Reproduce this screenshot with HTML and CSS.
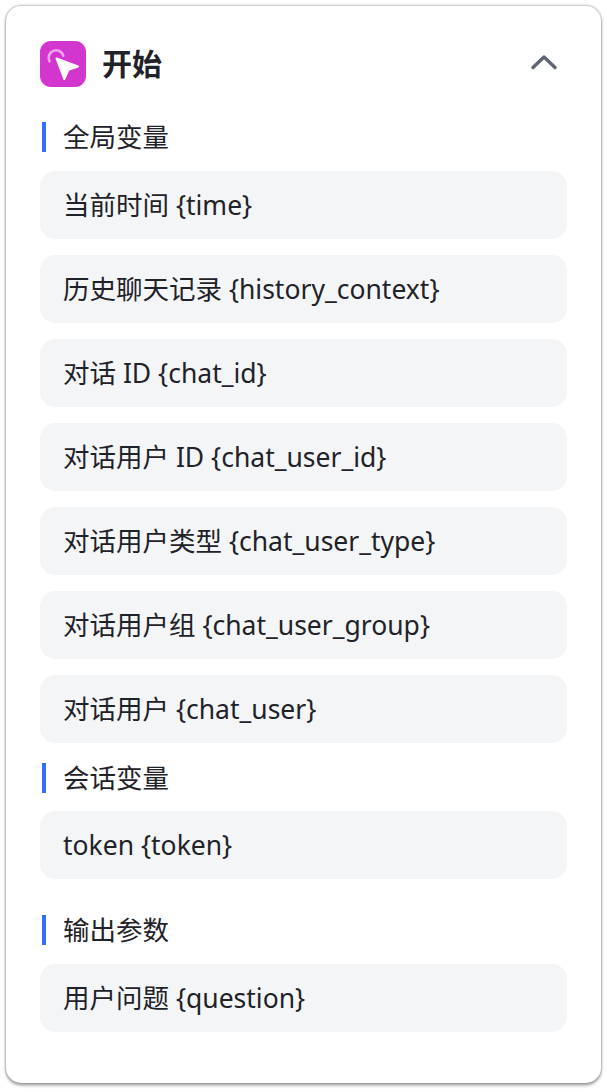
FILE: index.html
```html
<!DOCTYPE html>
<html lang="en">
<head>
  <meta charset="UTF-8" />
  <title>开始</title>
  <link rel="stylesheet" href="styles.css">
</head>
<body>
  <main class="node-card">
    <header class="node-header">
      <div class="node-title">
        <span class="node-icon">
          <svg viewBox="0 0 46 46" width="46" height="46">
            <path d="M9.500 20.300a7.500 7.500 0 1 1 13.800-5.700" fill="none" stroke="#eda6e8" stroke-width="2.600" stroke-linecap="round"/>
            <polygon points="16.500,17.500 38,25.500 28.500,28.800 24.300,38" fill="#fff" stroke="#fff" stroke-width="2" stroke-linejoin="round"/>
          </svg>
        </span>
        <h1>开始</h1>
      </div>
      <svg class="collapse-icon" viewBox="0 0 26 16" width="26" height="16">
        <path d="M2 13.500 13 3l11 10.500" fill="none" stroke="#5f6673" stroke-width="3.400" stroke-linecap="round" stroke-linejoin="round"/>
      </svg>
    </header>

    <h2 class="section-label">全局变量</h2>
    <ul class="var-list">
      <li>当前时间 {time}</li>
      <li>历史聊天记录 {history_context}</li>
      <li>对话 ID {chat_id}</li>
      <li>对话用户 ID {chat_user_id}</li>
      <li>对话用户类型 {chat_user_type}</li>
      <li>对话用户组 {chat_user_group}</li>
      <li>对话用户 {chat_user}</li>
    </ul>

    <h2 class="section-label section-session">会话变量</h2>
    <ul class="var-list">
      <li>token {token}</li>
    </ul>

    <h2 class="section-label section-output">输出参数</h2>
    <ul class="var-list">
      <li>用户问题 {question}</li>
    </ul>
  </main>
</body>
</html>
```

FILE: styles.css
```css
* {
  margin: 0;
  padding: 0;
  box-sizing: border-box;
}
body {
  font-family: "Noto Sans", "Noto Sans CJK SC", sans-serif;
  background: #fff;
  color: #1f2329;
  padding: 6px;
  height: 1092px;
}
.node-card {
  width: 595px;
  height: 1077px;
  background: #fff;
  border-radius: 15px;
  box-shadow: 0 0 3px rgba(0, 0, 0, 0.5), 0 3px 3px rgba(0, 0, 0, 0.25);
  padding: 34px 34px 0 34px;
}
.node-header {
  display: flex;
  justify-content: space-between;
  align-items: center;
  height: 46px;
  padding-right: 10px;
}
.node-title {
  display: flex;
  align-items: center;
  gap: 16px;
}
.node-icon {
  display: block;
  width: 46px;
  height: 46px;
  margin-top: 1px;
  background: #d335cf;
  border-radius: 11px;
}
.node-icon svg {
  display: block;
}
h1 {
  font-size: 30px;
  font-weight: 700;
  line-height: 46px;
  margin-top: 2px;
}
.collapse-icon {
  margin-top: -2px;
}
.section-label {
  display: flex;
  align-items: center;
  height: 30px;
  margin: 36px 0 19px 2px;
  padding-left: 17px;
  border-left: 4px solid #3370ff;
  font-size: 26.5px;
  font-weight: 400;
  line-height: 30px;
}
.section-session {
  margin-top: 20px;
  margin-bottom: 18px;
}
.section-output {
  margin-top: 36px;
}
.var-list {
  list-style: none;
  display: flex;
  flex-direction: column;
  gap: 16px;
}
.var-list li {
  height: 68px;
  padding: 0 23px;
  background: #f4f5f7;
  border-radius: 15px;
  font-size: 26.5px;
  line-height: 68px;
  white-space: nowrap;
}
```
